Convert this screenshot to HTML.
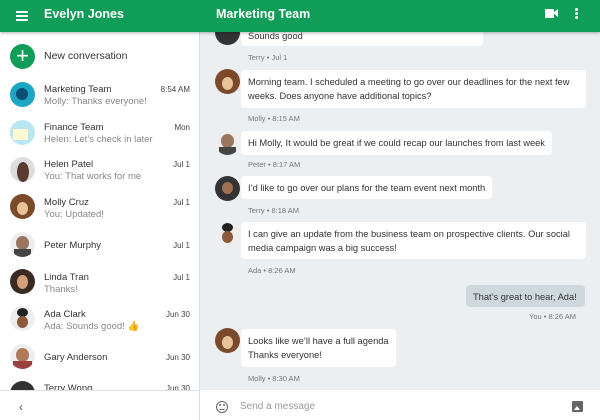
<!DOCTYPE html>
<html><head><style>
*{margin:0;padding:0;box-sizing:border-box}
body{width:600px;height:420px;overflow:hidden;font-family:"Liberation Sans","Noto Sans CJK JP",sans-serif;background:#eceff1;position:relative;color:#333}
.a{position:absolute}
.hdr{left:0;top:0;width:600px;height:32px;background:#0f9d58;box-shadow:0 1px 3px rgba(0,0,0,.3);z-index:5}
.side{left:0;top:0;width:200px;height:420px;background:#fff;border-right:1px solid #ddd}
.av{position:absolute;width:25px;height:25px;border-radius:50%;overflow:hidden}
.nm{position:absolute;left:44px;font-size:9.5px;color:#333;white-space:nowrap}
.sub{position:absolute;left:44px;font-size:9.5px;color:#888;white-space:nowrap}
.tm{position:absolute;left:130px;width:60px;text-align:right;font-size:8px;color:#444}
.b{position:absolute;background:#fff;border-radius:4px;font-size:9.3px;line-height:14px;padding:5px 7px;color:#333;white-space:nowrap}
.mt{position:absolute;font-size:7.5px;color:#777}
</style></head><body>
<div class="a side"></div>
<div class="a hdr">
  <div class="a" style="left:16px;top:11px;width:12px;height:2px;background:#fff;box-shadow:0 4px 0 #fff,0 8px 0 #fff"></div>
  <div class="a" style="left:44px;top:7px;font-size:12.5px;font-weight:bold;color:#fff">Evelyn Jones</div>
  <div class="a" style="left:216px;top:7px;font-size:12.5px;font-weight:bold;color:#fff">Marketing Team</div>
  <div class="a" style="left:545px;top:9px;width:9px;height:9px;background:#fff;border-radius:1px"></div>
  <div class="a" style="left:553px;top:9px;width:0;height:0;border-top:4.5px solid transparent;border-bottom:4.5px solid transparent;border-right:5px solid #fff"></div>
  <div class="a" style="left:575px;top:8px;width:3px;height:3px;border-radius:50%;background:#fff;box-shadow:0 4px 0 #fff,0 8px 0 #fff"></div>
</div>
<!-- sidebar -->
<div class="a" style="left:10px;top:44px;width:25px;height:25px;border-radius:50%;background:#0f9d58;color:#fff;font-size:22px;line-height:24px;text-align:center">+</div>
<div class="nm" style="top:50px;font-size:10.5px">New conversation</div>

<div class="av" style="left:10px;top:82px;background:#1ba7c4"><div class="a" style="left:6px;top:6px;width:12px;height:12px;background:#0b4e78;border-radius:50%"></div></div>
<div class="nm" style="top:84px">Marketing Team</div><div class="sub" style="top:96px">Molly: Thanks everyone!</div><div class="tm" style="top:85px">8:54 AM</div>

<div class="av" style="left:10px;top:120px;background:#b8e6f2"><div class="a" style="left:3px;top:9px;width:15px;height:11px;background:#fff8d0"></div></div>
<div class="nm" style="top:122px">Finance Team</div><div class="sub" style="top:134px">Helen: Let’s check in later</div><div class="tm" style="top:123px">Mon</div>

<div class="av" style="left:10px;top:157px;background:#ddd"><div class="a" style="left:7px;top:5px;width:12px;height:20px;background:#5a3a2e;border-radius:50%"></div></div>
<div class="nm" style="top:159px">Helen Patel</div><div class="sub" style="top:171px">You: That works for me</div><div class="tm" style="top:160px">Jul 1</div>

<div class="av" style="left:10px;top:194px;background:#7a4a2a"><div class="a" style="left:7px;top:8px;width:11px;height:13px;background:#e8c39a;border-radius:50%"></div></div>
<div class="nm" style="top:197px">Molly Cruz</div><div class="sub" style="top:209px">You: Updated!</div><div class="tm" style="top:198px">Jul 1</div>

<div class="av" style="left:10px;top:232px;background:#eee"><div class="a" style="left:6px;top:4px;width:13px;height:14px;background:#9a7560;border-radius:50%"></div><div class="a" style="left:4px;top:17px;width:17px;height:10px;background:#444"></div></div>
<div class="nm" style="top:240px">Peter Murphy</div><div class="tm" style="top:241px">Jul 1</div>

<div class="av" style="left:10px;top:269px;background:#3a2a22"><div class="a" style="left:7px;top:6px;width:11px;height:14px;background:#d2a07a;border-radius:50%"></div></div>
<div class="nm" style="top:272px">Linda Tran</div><div class="sub" style="top:284px">Thanks!</div><div class="tm" style="top:273px">Jul 1</div>

<div class="av" style="left:10px;top:306px;background:#eee"><div class="a" style="left:7px;top:2px;width:11px;height:9px;background:#222;border-radius:50%"></div><div class="a" style="left:7px;top:10px;width:11px;height:12px;background:#8a5a3a;border-radius:50%"></div></div>
<div class="nm" style="top:309px">Ada Clark</div><div class="sub" style="top:321px">Ada: Sounds good! <span style="color:#f0a020">👍</span></div><div class="tm" style="top:310px">Jun 30</div>

<div class="av" style="left:10px;top:344px;background:#eee"><div class="a" style="left:6px;top:4px;width:13px;height:14px;background:#b07a5a;border-radius:50%"></div><div class="a" style="left:3px;top:17px;width:19px;height:10px;background:#9a4040"></div></div>
<div class="nm" style="top:352px">Gary Anderson</div><div class="tm" style="top:353px">Jun 30</div>

<div class="av" style="left:10px;top:381px;background:#333"></div>
<div class="nm" style="top:383px">Terry Wong</div><div class="tm" style="top:384px">Jun 30</div>
<div class="a" style="left:0;top:390px;width:199px;height:30px;background:#fff;border-top:1px solid #e0e0e0"></div>
<div class="a" style="left:19px;top:400px;font-size:12px;color:#555">‹</div>

<!-- chat -->
<div class="av" style="left:215px;top:20px;background:#333"></div>
<div class="b" style="left:241px;top:24px;width:242px;height:22px">Sounds good</div>
<div class="mt" style="left:248px;top:53px">Terry • Jul 1</div>

<div class="av" style="left:215px;top:69px;background:#7a4a2a"><div class="a" style="left:7px;top:8px;width:11px;height:13px;background:#e8c39a;border-radius:50%"></div></div>
<div class="b" style="left:241px;top:70px;width:345px;height:38px">Morning team. I scheduled a meeting to go over our deadlines for the next few<br>weeks. Does anyone have additional topics?</div>
<div class="mt" style="left:248px;top:114px">Molly • 8:15 AM</div>

<div class="av" style="left:215px;top:130px;background:#eee"><div class="a" style="left:6px;top:4px;width:13px;height:14px;background:#9a7560;border-radius:50%"></div><div class="a" style="left:4px;top:17px;width:17px;height:10px;background:#444"></div></div>
<div class="b" style="left:241px;top:131px;width:311px;height:24px">Hi Molly, It would be great if we could recap our launches from last week</div>
<div class="mt" style="left:248px;top:160px">Peter • 8:17 AM</div>

<div class="av" style="left:215px;top:176px;background:#333"><div class="a" style="left:7px;top:6px;width:11px;height:12px;background:#a07050;border-radius:50%"></div></div>
<div class="b" style="left:241px;top:176px;width:251px;height:23px">I’d like to go over our plans for the team event next month</div>
<div class="mt" style="left:248px;top:206px">Terry • 8:18 AM</div>

<div class="av" style="left:215px;top:221px;background:#eee"><div class="a" style="left:7px;top:2px;width:11px;height:9px;background:#222;border-radius:50%"></div><div class="a" style="left:7px;top:10px;width:11px;height:12px;background:#8a5a3a;border-radius:50%"></div></div>
<div class="b" style="left:241px;top:222px;width:345px;height:37px">I can give an update from the business team on prospective clients. Our social<br>media campaign was a big success!</div>
<div class="mt" style="left:248px;top:266px">Ada • 8:26 AM</div>

<div class="b" style="left:466px;top:285px;width:119px;height:22px;background:#cfd8dc">That’s great to hear, Ada!</div>
<div class="mt" style="left:529px;top:312px">You • 8:26 AM</div>

<div class="av" style="left:215px;top:328px;background:#7a4a2a"><div class="a" style="left:7px;top:8px;width:11px;height:13px;background:#e8c39a;border-radius:50%"></div></div>
<div class="b" style="left:241px;top:329px;width:155px;height:38px">Looks like we’ll have a full agenda<br>Thanks everyone!</div>
<div class="mt" style="left:248px;top:374px">Molly • 8:30 AM</div>

<div class="a" style="left:200px;top:390px;width:400px;height:30px;background:#fff"></div>
<div class="a" style="left:216px;top:401px;width:12px;height:12px;border:1.5px solid #666;border-radius:50%"></div>
<div class="a" style="left:219px;top:404px;width:2px;height:2px;background:#666;border-radius:50%;box-shadow:4px 0 0 #666"></div>
<div class="a" style="left:219px;top:408px;width:6px;height:2px;border-bottom:1.3px solid #666;border-radius:0 0 3px 3px"></div>
<div class="a" style="left:240px;top:401px;font-size:10px;color:#999">Send a message</div>
<div class="a" style="left:572px;top:401px;width:11px;height:11px;background:#666;border-radius:1px"></div>
<div class="a" style="left:574px;top:406px;width:0;height:0;border-left:3px solid transparent;border-right:3px solid transparent;border-bottom:4px solid #fff"></div>
</body></html>
